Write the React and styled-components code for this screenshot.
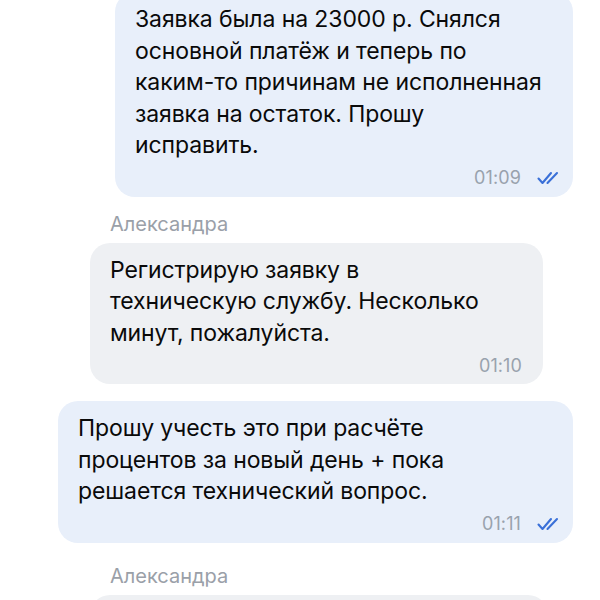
import styled, { createGlobalStyle } from 'styled-components';

const GlobalStyle = createGlobalStyle`
    html, body {
        margin: 0;
        padding: 0;
        background: #ffffff;
        overflow: hidden;
    }
    body {
        font-family: Inter, "Noto Sans", "Liberation Sans", sans-serif;
        -webkit-font-smoothing: antialiased;
    }
`;

const Feed = styled.div`
    width: 600px;
    height: 600px;
    overflow: hidden;
    display: flex;
    flex-direction: column;
`;

// лента прокручена: первое сообщение уходит за верхний край
const List = styled.div`
    display: flex;
    flex-direction: column;
    margin-top: -8px;
`;

const Bubble = styled.div`
    box-sizing: border-box;
    width: ${(props) => props.width}px;
    align-self: ${(props) => (props.out ? 'flex-end' : 'flex-start')};
    margin-left: ${(props) => (props.out ? 0 : 90)}px;
    margin-right: ${(props) => (props.out ? 27 : 0)}px;
    margin-bottom: ${(props) => props.gap || 0}px;
    padding: 12px 21px 7px 20px;
    border-radius: 20px;
    background-color: ${(props) => (props.out ? '#e8effa' : '#eef0f3')};
`;

const Text = styled.div`
    font-size: 23px;
    line-height: 31.5px;
    color: #0a0a0a;
    letter-spacing: -0.1px;
`;

const Meta = styled.div`
    display: flex;
    justify-content: flex-end;
    align-items: center;
    gap: 16px;
    height: 24px;
    margin-top: 4px;
    margin-right: ${(props) => (props.out ? -8 : 0)}px;
`;

const Time = styled.span`
    font-size: 18px;
    color: #99a2ad;
    letter-spacing: 0.1px;
`;

const Name = styled.div`
    margin: 16px 0 8px 110px;
    font-size: 20px;
    line-height: 22px;
    color: #9aa0a8;
`;

function Checks() {
    return (
        <svg width="23" height="14" viewBox="0 0 23 14" fill="none">
            <path
                d="M1.5 7.5 L5.5 12 L14 2"
                stroke="#3a70d8"
                strokeWidth="2.1"
                strokeLinecap="round"
                strokeLinejoin="round"
            />
            <path d="M10.5 12 L20 2" stroke="#3a70d8" strokeWidth="2.1" strokeLinecap="round" />
        </svg>
    );
}

const lines = (arr) =>
    arr.map((l, i) => (
        <span key={i}>
            {l}
            {i < arr.length - 1 ? <br /> : null}
        </span>
    ));

function App() {
    return (
        <Feed>
            <GlobalStyle />
            <List>
                <Bubble out width={458}>
                    <Text>
                        {lines([
                            'Заявка была на 23000 р. Снялся',
                            'основной платёж и теперь по',
                            'каким-то причинам не исполненная',
                            'заявка на остаток. Прошу',
                            'исправить.',
                        ])}
                    </Text>
                    <Meta out>
                        <Time>01:09</Time>
                        <Checks />
                    </Meta>
                </Bubble>
                <Name>Александра</Name>
                <Bubble width={453} gap={17}>
                    <Text>
                        {lines(['Регистрирую заявку в', 'техническую службу. Несколько', 'минут, пожалуйста.'])}
                    </Text>
                    <Meta>
                        <Time>01:10</Time>
                    </Meta>
                </Bubble>
                <Bubble out width={515} gap={6}>
                    <Text>
                        {lines(['Прошу учесть это при расчёте', 'процентов за новый день + пока', 'решается технический вопрос.'])}
                    </Text>
                    <Meta out>
                        <Time>01:11</Time>
                        <Checks />
                    </Meta>
                </Bubble>
                <Name>Александра</Name>
                <Bubble width={458}>
                    <Text>&nbsp;</Text>
                </Bubble>
            </List>
        </Feed>
    );
}

export default App;
